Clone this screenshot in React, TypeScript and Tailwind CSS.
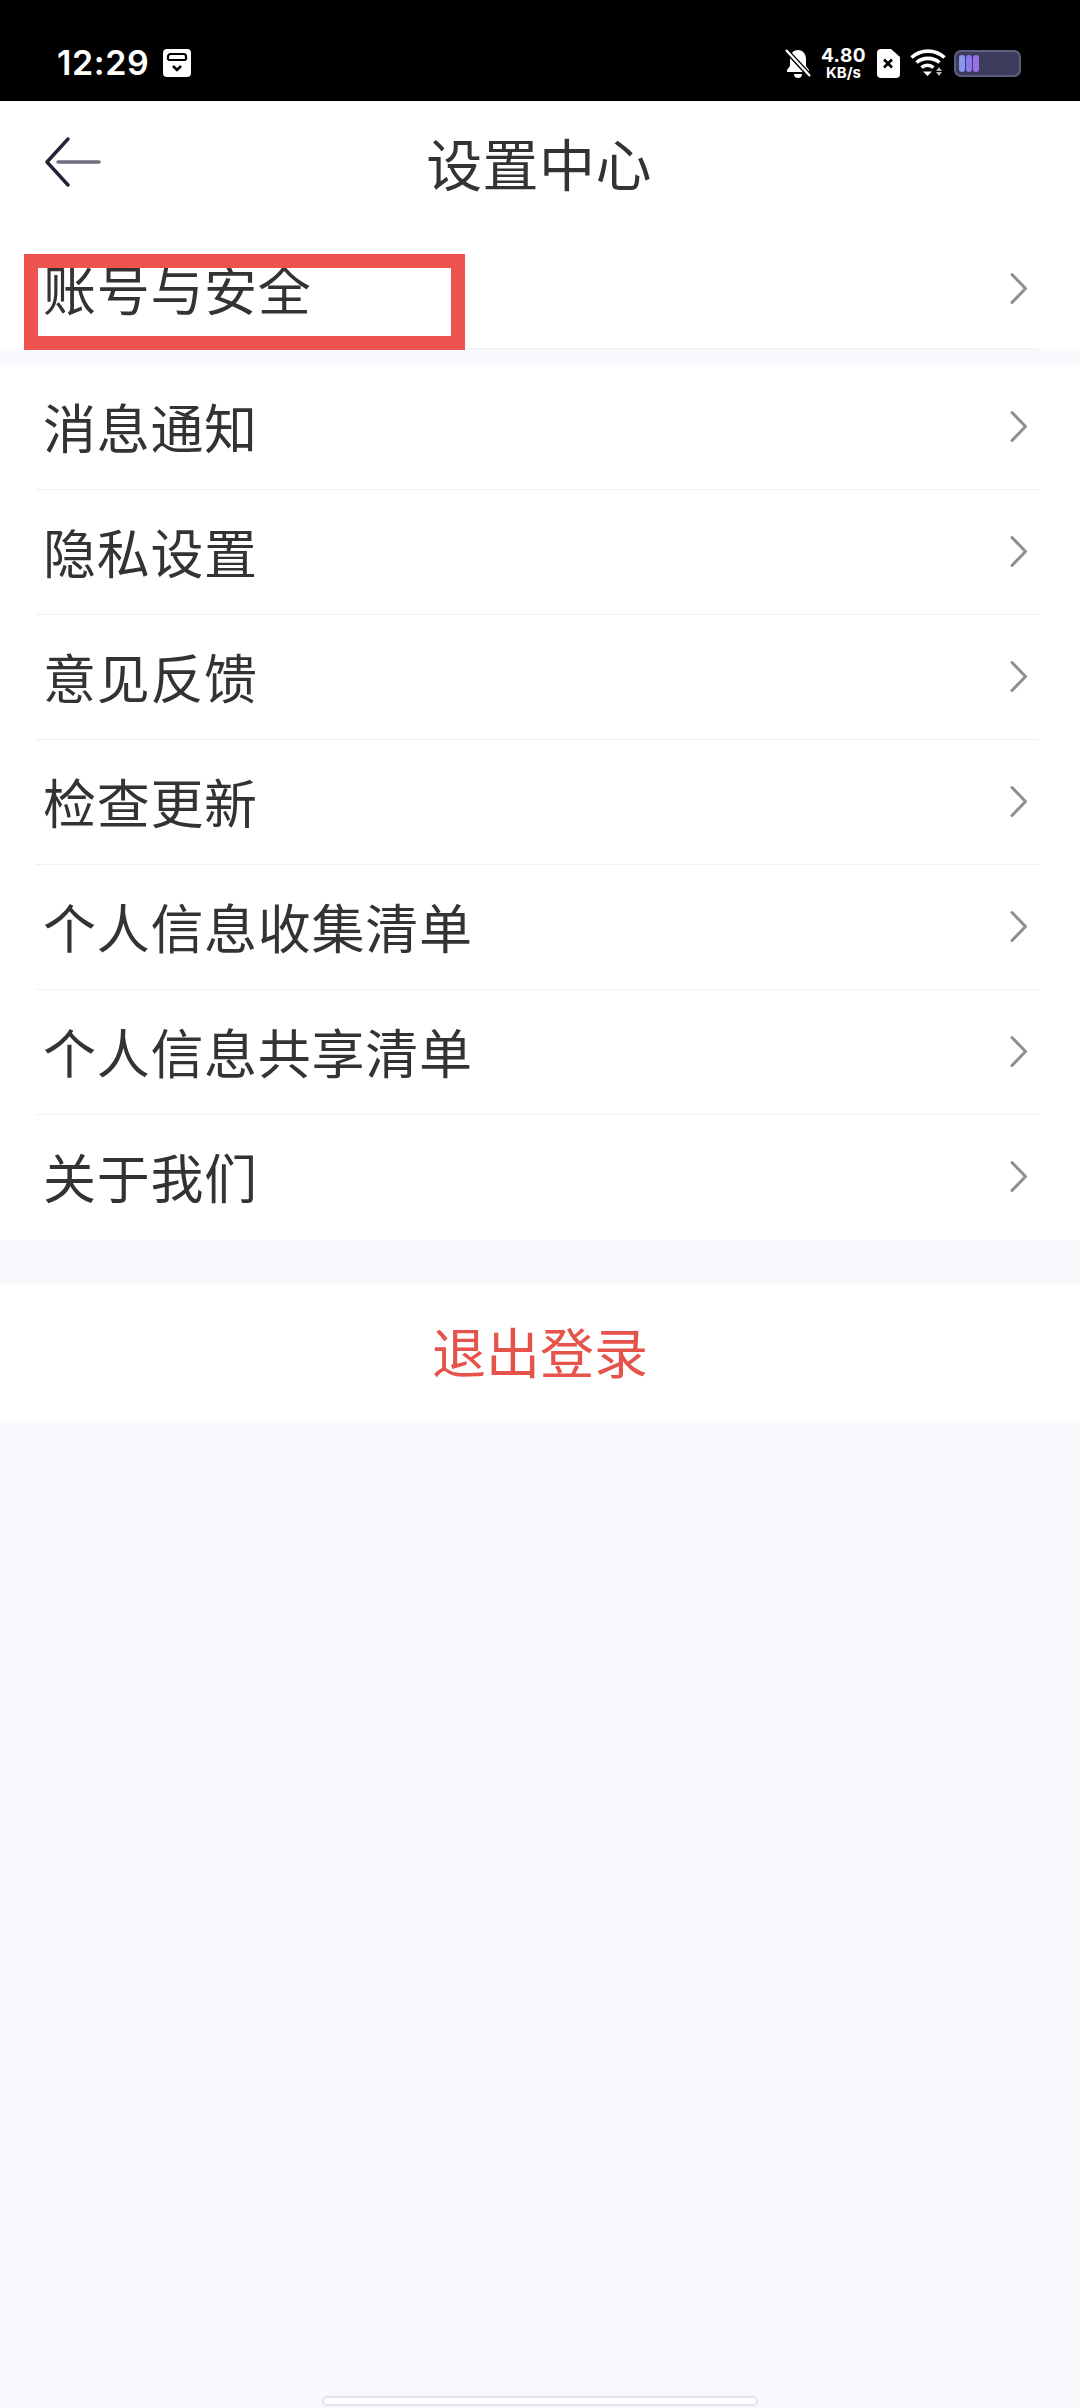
const CJK = { fontFamily: '"Noto Sans CJK SC", "Noto Sans", sans-serif' };

function Chevron() {
  return (
    <svg width="20" height="34" viewBox="0 0 20 34" fill="none" className="mb-[2px] shrink-0">
      <path d="M3 2.5 L16.5 16.5 L3 30.5" stroke="#8f8f8f" strokeWidth="3" strokeLinecap="round" strokeLinejoin="round" />
    </svg>
  );
}

function Row({ label, last, h = "h-[125px]" }: { label: string; last?: boolean; h?: string }) {
  return (
    <div className={`relative flex ${h} items-center justify-between pl-[43px] pr-[51px]`}>
      <span className="pb-[3px] text-[53px] leading-none tracking-[0.7px] text-[#333333]" style={CJK}>{label}</span>
      <Chevron />
      {!last && <div className="absolute bottom-0 left-[36px] right-[42px] h-px bg-[#f0f0f2]" />}
    </div>
  );
}

function StatusBar() {
  return (
    <div className="flex h-[101px] items-center justify-between bg-black pl-[57px] pr-[59px] pt-[25px] text-white">
      <div className="flex items-center gap-[14px]">
        <span className="text-[34px] font-semibold leading-none tracking-[0.6px]" style={{ fontFamily: "Inter, sans-serif" }}>12:29</span>
        <svg width="28" height="28" viewBox="0 0 28 28">
          <rect width="28" height="28" rx="4" fill="#fff" />
          <path d="M5 11V7.5A2.5 2.5 0 0 1 7.5 5h13A2.5 2.5 0 0 1 23 7.5V11" stroke="#000" strokeWidth="2.2" fill="none" />
          <rect x="5" y="10" width="18" height="2" fill="#000" />
          <path d="M10 17l4 4 4-4" stroke="#000" strokeWidth="2.6" fill="none" />
        </svg>
      </div>
      <div className="flex items-center">
        <svg width="26" height="30" viewBox="0 0 26 30" className="mr-[9px]">
          <path d="M13 2c-5 0-8 4-8 9v7l-3 4v2h22v-2l-3-4v-7c0-5-3-9-8-9z" fill="#fff" />
          <path d="M9 26a4 4 0 0 0 8 0z" fill="#fff" />
          <path d="M0 1L25 28" stroke="#000" strokeWidth="5" />
          <path d="M1 2L25 28" stroke="#fff" strokeWidth="2.4" />
        </svg>
        <div className="flex w-[47px] flex-col items-center font-bold text-white" style={{ fontFamily: "Inter, sans-serif" }}>
          <span className="text-[19px] leading-[18px] tracking-[0.5px]">4.80</span>
          <span className="text-[15px] leading-[15px]">KB/s</span>
        </div>
        <svg width="23" height="29" viewBox="0 0 23 29" className="ml-[10px]">
          <path d="M4 0h10l9 8v17a4 4 0 0 1-4 4H4a4 4 0 0 1-4-4V4a4 4 0 0 1 4-4z" fill="#fff" />
          <path d="M7 10.5l8 8M15 10.5l-8 8" stroke="#000" strokeWidth="2.6" />
        </svg>
        <svg width="36" height="28" viewBox="0 0 36 28" className="ml-[10px]">
          <path d="M1.5 8.5C11 0 25 0 34.5 8.5" stroke="#fff" strokeWidth="3.6" fill="none" />
          <path d="M6.5 13.5C13 8 23 8 29.5 13.5" stroke="#fff" strokeWidth="3.6" fill="none" />
          <path d="M11.5 18.5C15 15.5 20 15.5 23.5 18.5" stroke="#fff" strokeWidth="3.6" fill="none" />
          <path d="M13 22.5h9l-4.5 4.5z" fill="#fff" />
          <path d="M29 18l3 4h-6zM29 27l3-4h-6z" fill="#bbb" />
        </svg>
        <div className="ml-[8px] flex h-[27px] w-[67px] items-center gap-[1px] rounded-[7px] border-[2px] border-[#5d5f7c] bg-[#3c3d5c] pl-[3px]">
          <span className="h-[17px] w-[6px] rounded-[3px] bg-[#8c95f0]" />
          <span className="h-[17px] w-[6px] rounded-[3px] bg-[#8c78ee]" />
          <span className="h-[17px] w-[6px] rounded-[3px] bg-[#9a6fe8]" />
        </div>
      </div>
    </div>
  );
}

export default function App() {
  return (
    <div className="relative flex h-[2408px] w-[1080px] flex-col overflow-hidden bg-[#f8f9fd]" style={CJK}>
      <StatusBar />
      <div className="relative flex h-[130px] items-center justify-center bg-white">
        <svg width="56" height="50" viewBox="0 0 56 50" className="absolute left-[45px] top-[36px]">
          <path d="M23 2 L2 25 L23 48" stroke="#232338" strokeWidth="3.4" fill="none" strokeLinecap="round" strokeLinejoin="round" />
          <path d="M13 25 H54" stroke="#6e6e80" strokeWidth="3.4" strokeLinecap="round" />
        </svg>
        <span className="pb-[8px] pr-[2px] text-[56px] leading-none tracking-[0.4px] text-[#333333]">设置中心</span>
      </div>
      <div className="bg-white">
        <Row label="账号与安全" h="h-[118px]" />
      </div>
      <div className="mt-[16px] bg-white">
        <Row label="消息通知" />
        <Row label="隐私设置" />
        <Row label="意见反馈" />
        <Row label="检查更新" />
        <Row label="个人信息收集清单" />
        <Row label="个人信息共享清单" />
        <Row label="关于我们" last />
      </div>
      <div className="mt-[44px] flex h-[139px] items-center justify-center bg-white">
        <span className="pb-[6px] text-[54px] leading-none text-[#e5534b]">退出登录</span>
      </div>
      <div className="absolute left-[24px] top-[254px] h-[96px] w-[441px] border-[14px] border-[#ef5350]" />
      <div className="absolute bottom-[2px] left-1/2 h-[10px] w-[436px] -translate-x-1/2 rounded-full border-[2px] border-[#e2e4ea] bg-white" />
    </div>
  );
}
